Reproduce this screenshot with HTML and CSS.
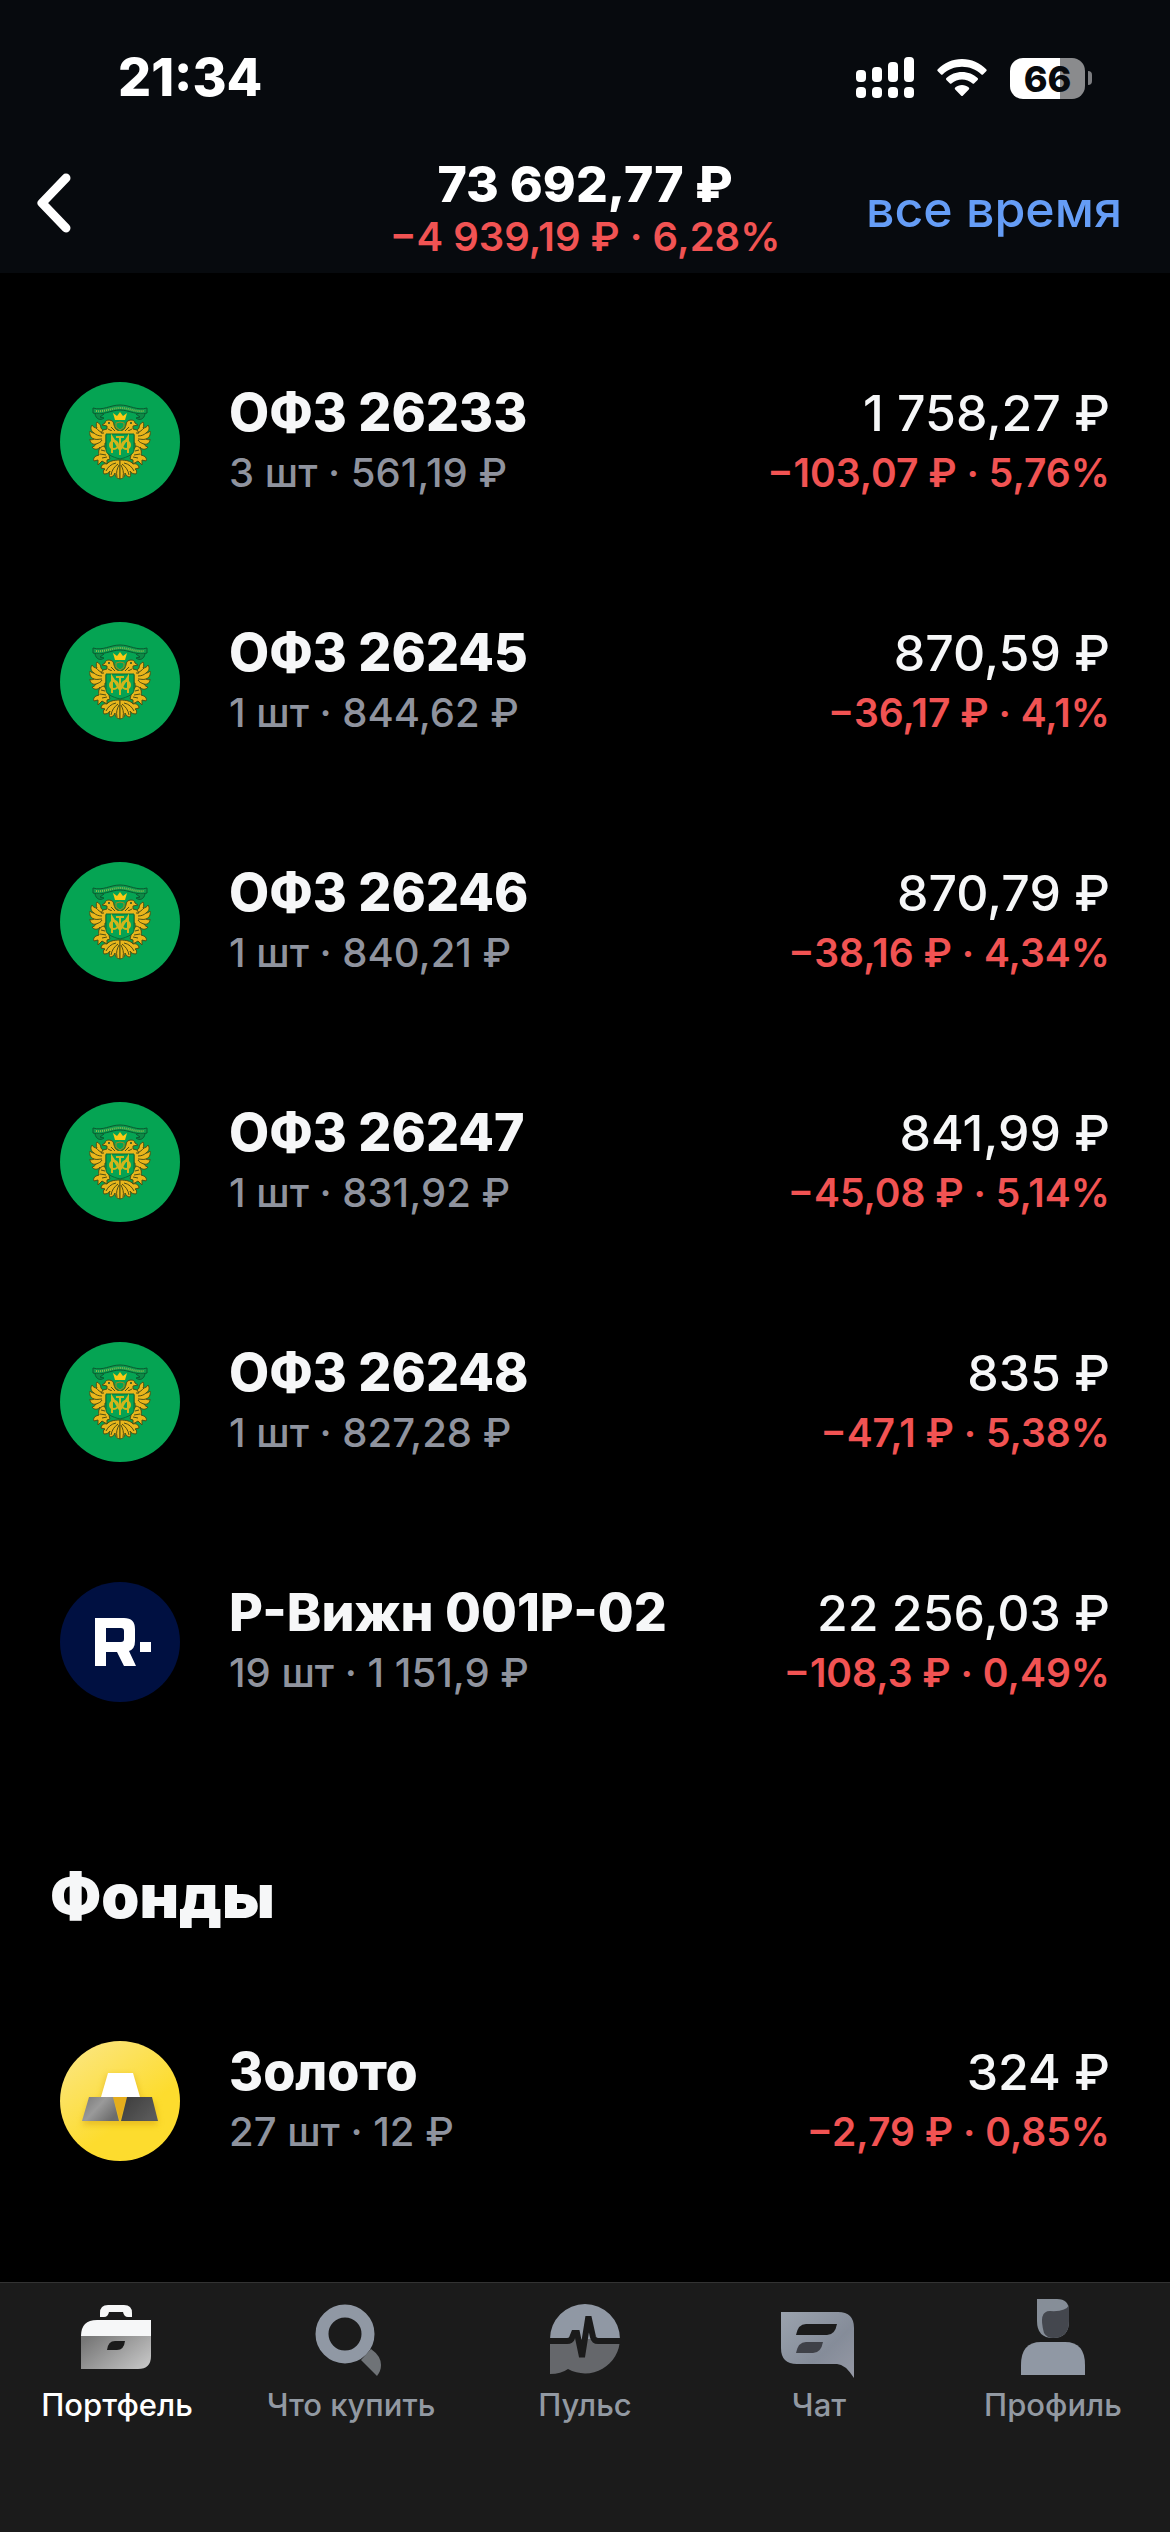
FILE: index.html
```html
<!DOCTYPE html>
<html lang="ru">
<head>
    <meta charset="UTF-8">
    <meta name="viewport" content="width=device-width, initial-scale=1.0">
    <title>Портфель</title>
    <link rel="stylesheet" href="styles.css">
</head>
<body>
    <svg class="sprite" aria-hidden="true">
        <defs>
            <linearGradient id="gold-bg" x1="0" y1="0" x2="0.5" y2="0.7">
                <stop offset="0" stop-color="#fbe78a"/>
                <stop offset="1" stop-color="#fddc2e"/>
            </linearGradient>
            <linearGradient id="bar-left" x1="0" y1="0" x2="1" y2="0.6">
                <stop offset="0" stop-color="#777"/>
                <stop offset="0.5" stop-color="#9a9a9a"/>
                <stop offset="1" stop-color="#6c6c6c"/>
            </linearGradient>
            <linearGradient id="bar-right" x1="0" y1="0" x2="1" y2="0.6">
                <stop offset="0" stop-color="#3c3c3c"/>
                <stop offset="1" stop-color="#5a5a5a"/>
            </linearGradient>
            <linearGradient id="case-bottom" x1="0" y1="0.2" x2="1" y2="0.8">
                <stop offset="0" stop-color="#777"/>
                <stop offset="1" stop-color="#c4c4c4"/>
            </linearGradient>
            <linearGradient id="grey-blue" x1="0" y1="0" x2="1" y2="1">
                <stop offset="0" stop-color="#9ba3ae"/>
                <stop offset="0.6" stop-color="#858c99"/>
                <stop offset="1" stop-color="#9699a5"/>
            </linearGradient>
            <filter id="soft" x="-30%" y="-30%" width="160%" height="160%">
                <feGaussianBlur stdDeviation="3"/>
            </filter>
            <g id="emblem-half">
                <!-- wing feathers -->
                <path d="M46 50c-2-1-4-2-5-4 0-3-2-5-4-6-1 2-1 4 0 6-2 0-4-1-5-3-2 3-1 6 2 8-2 0-3-1-4-2-1 4 1 7 4 8-2 1-3 1-4 0 0 4 3 6 6 5-1 2-3 3-4 3 2 3 6 3 8 0l-1 4c4-1 6-4 6-8h1z"/>
                <path d="M36 46c2 2 4 4 7 5M34 51c2 2 5 3 8 3M34 57c3 1 5 0 8 0M36 62c3-1 5-2 6-4" fill="none"/>
                <!-- head and neck -->
                <path d="M58 51V48c-3 0-3-3-4-5 0-3-2-5-5-5-2 0-4 1-4 3l-3 2 5 1v3l-4 1-2 3z"/>
                <circle cx="49" cy="41" r="1" fill="#12552b" stroke="none"/>
                <path d="M48 47l4 2M51 45l4 4" fill="none"/>
                <!-- leg -->
                <path d="M44 64c-5 1-6 5-5 9l-3 1c-2 1-3 3-2 5l4-1v5l4-4 5 3v-4l3-1c-1-5-3-9-6-13z"/>
                <path d="M41 68l4 1M40 72l6 1M42 76l5-1" fill="none"/>
                <!-- tail feathers -->
                <path d="M60 78c-6 0-11 1-13 4-3-1-6 1-6 4l4 1c-2 1-2 3-1 5 3 0 5-1 6-3-1 2-1 4 0 6 3 0 4-2 5-4 0 3 1 5 5 6z"/>
                <path d="M56 81c-5 1-8 4-10 8M58 82c-4 3-6 6-7 11M59 83c-2 4-3 7-2 12" fill="none"/>
            </g>
            <symbol id="minfin" viewBox="0 0 120 120">
                <circle cx="60" cy="60" r="60" fill="#05a453"/>
                <g fill="#e9b61c" stroke="#4d5014" stroke-width="1">
                    <use href="#emblem-half"/>
                    <use href="#emblem-half" transform="translate(120 0) scale(-1 1)"/>
                    <path d="M44 49h32v4H44z" stroke="none"/>
                    <path d="M55 38l-2-7 4 3 3-4 3 4 4-3-2 7z" stroke="none" fill="#fbc915"/>
                </g>
                <path d="M56 41l4-1 4 1v4l-4 3-4-3z" fill="#05a453" stroke="#a58a1a"/>
                <path d="M46 52h28v16c0 4-6 7-14 9-8-2-14-5-14-9z" fill="#05a453" stroke="#0b6a36"/>
                <g fill="none" stroke="#d3b51c" stroke-width="2">
                    <path d="M52 71V55l8 13 8-13v16M60 54v19M56 55h8"/>
                    <circle cx="54" cy="63" r="4"/>
                    <circle cx="66" cy="63" r="4"/>
                </g>
                <!-- ribbon -->
                <path d="M33 26c10 3 17-3 27-3s17 6 27 3v5c-9 3-18-3-27-3s-18 6-27 3z" fill="#0d9b4e" stroke="#0b5a30"/>
                <path d="M36 29c9 1 15-3 24-3s15 4 24 3" fill="none" stroke="#86b94c" stroke-width="2" stroke-dasharray="1 1"/>
                <path d="M35 32c1 5 5 7 9 4l-4-1 4-3M85 32c-1 5-5 7-9 4l4-1-4-3" fill="#0d8a46" stroke="#0b5a30"/>
            </symbol>
        </defs>
    </svg>

    <header class="top">
        <div class="status-bar">
            <time class="clock">21:34</time>
            <div class="status-icons">
                <svg width="58" height="42" viewBox="0 0 58 42" fill="#fff" aria-hidden="true">
                    <rect x="0" y="13" width="10" height="12" rx="4"/>
                    <rect x="16" y="10" width="10" height="15" rx="4"/>
                    <rect x="32" y="5" width="10" height="20" rx="4"/>
                    <rect x="48" y="0" width="10" height="25" rx="4"/>
                    <rect x="0" y="30" width="10" height="11" rx="4"/>
                    <rect x="16" y="30" width="10" height="11" rx="4"/>
                    <rect x="32" y="30" width="10" height="11" rx="4"/>
                    <rect x="48" y="30" width="10" height="11" rx="4"/>
                </svg>
                <svg width="50" height="42" viewBox="0 0 50 42" fill="#fff" aria-hidden="true">
                    <path d="M25 2C15.500 2 7 6 .8 12.200q-1 1 0 2l3 3q1 1 2 0C11 12.500 17.700 9.800 25 9.800s14 2.700 19.200 7.400q1 1 2 0l3-3q1-1 0-2C43 6 34.500 2 25 2z"/>
                    <path d="M25 15c-6 0-11.500 2.300-15.600 6q-1 1 0 2l3.300 3.300q1 1 2 0c2.800-2.400 6.400-3.900 10.300-3.900s7.500 1.500 10.300 3.900q1 1 2 0l3.300-3.300q1-1 0-2C36.500 17.300 31 15 25 15z"/>
                    <path d="M25 28c-2.600 0-5 .9-6.800 2.500q-1 1 0 2l5.800 6q1 1 2 0l5.800-6q1-1 0-2C30 28.900 27.600 28 25 28z"/>
                </svg>
                <div class="battery"><span class="battery-level">66</span></div>
            </div>
        </div>
        <div class="nav">
            <button type="button" class="back" aria-label="Назад">
                <svg width="40" height="72" viewBox="0 0 40 72" fill="none" stroke="#fff" stroke-width="9" stroke-linecap="round" stroke-linejoin="round" aria-hidden="true">
                    <path d="M30 5L6 30l24 25"/>
                </svg>
            </button>
            <div class="total">
                <h1 class="total-sum">73 692,77 ₽</h1>
                <p class="total-change">−4 939,19 ₽ · 6,28%</p>
            </div>
            <button type="button" class="period">все время</button>
        </div>
    </header>

    <main class="content">
        <ul class="list">
            <li>
                <a href="#" class="row">
                    <svg class="avatar" aria-hidden="true"><use href="#minfin"/></svg>
                    <span class="info"><span class="name">ОФЗ 26233</span><span class="count">3 шт · 561,19 ₽</span></span>
                    <span class="value"><span class="sum">1 758,27 ₽</span><span class="change">−103,07 ₽ · 5,76%</span></span>
                </a>
            </li>
            <li>
                <a href="#" class="row">
                    <svg class="avatar" aria-hidden="true"><use href="#minfin"/></svg>
                    <span class="info"><span class="name">ОФЗ 26245</span><span class="count">1 шт · 844,62 ₽</span></span>
                    <span class="value"><span class="sum">870,59 ₽</span><span class="change">−36,17 ₽ · 4,1%</span></span>
                </a>
            </li>
            <li>
                <a href="#" class="row">
                    <svg class="avatar" aria-hidden="true"><use href="#minfin"/></svg>
                    <span class="info"><span class="name">ОФЗ 26246</span><span class="count">1 шт · 840,21 ₽</span></span>
                    <span class="value"><span class="sum">870,79 ₽</span><span class="change">−38,16 ₽ · 4,34%</span></span>
                </a>
            </li>
            <li>
                <a href="#" class="row">
                    <svg class="avatar" aria-hidden="true"><use href="#minfin"/></svg>
                    <span class="info"><span class="name">ОФЗ 26247</span><span class="count">1 шт · 831,92 ₽</span></span>
                    <span class="value"><span class="sum">841,99 ₽</span><span class="change">−45,08 ₽ · 5,14%</span></span>
                </a>
            </li>
            <li>
                <a href="#" class="row">
                    <svg class="avatar" aria-hidden="true"><use href="#minfin"/></svg>
                    <span class="info"><span class="name">ОФЗ 26248</span><span class="count">1 шт · 827,28 ₽</span></span>
                    <span class="value"><span class="sum">835 ₽</span><span class="change">−47,1 ₽ · 5,38%</span></span>
                </a>
            </li>
            <li>
                <a href="#" class="row">
                    <svg class="avatar" viewBox="0 0 120 120" aria-hidden="true">
                        <circle cx="60" cy="60" r="60" fill="#001041"/>
                        <!-- R-Vision mark -->
                        <path d="M35 36h29q11 0 11 11v12q0 8-6 10l7 15H64l-7-14H46v14H35zM46 46v14h15q3 0 3-3v-8q0-3-3-3z" fill="#fff" fill-rule="evenodd"/>
                        <path d="M80 60h11v10H80z" fill="#fff"/>
                    </svg>
                    <span class="info"><span class="name">Р-Вижн 001P-02</span><span class="count">19 шт · 1 151,9 ₽</span></span>
                    <span class="value"><span class="sum">22 256,03 ₽</span><span class="change">−108,3 ₽ · 0,49%</span></span>
                </a>
            </li>
        </ul>

        <h2 class="section-title">Фонды</h2>
        <ul class="list">
            <li>
                <a href="#" class="row">
                    <svg class="avatar" viewBox="0 0 120 120" aria-hidden="true">
                        <circle cx="60" cy="60" r="60" fill="url(#gold-bg)"/>
                        <path d="M47 34h27l7 24 14 4 3 22H22l7-24 12-2z" fill="#d9a818" opacity="0.6" filter="url(#soft)"/>
                        <path d="M53 56h14l-7 24z" fill="#e5ad1c"/>
                        <path d="M48 32h25l7 24H41z" fill="#fff"/>
                        <path d="M29 56h24l6 24H22z" fill="url(#bar-left)"/>
                        <path d="M67 56h25l6 24H61z" fill="url(#bar-right)"/>
                    </svg>
                    <span class="info"><span class="name">Золото</span><span class="count">27 шт · 12 ₽</span></span>
                    <span class="value"><span class="sum">324 ₽</span><span class="change">−2,79 ₽ · 0,85%</span></span>
                </a>
            </li>
        </ul>
    </main>

    <nav class="tab-bar">
        <a href="#" class="tab active" aria-current="page">
            <svg class="tab-icon" viewBox="0 0 96 96" aria-hidden="true">
                <path d="M31 28v-4q0-8 8-8h16q8 0 8 8v4h-4q-4 0-5-5H40q-1 5-5 5z" fill="#f6f7f8"/>
                <path d="M12 47q0-16 16-16h54v16z" fill="#f6f7f8"/>
                <path d="M12 47h70v20q0 13-13 13H12zM38 61h10q7 0 8-9H46q-7 0-8 9z" fill="url(#case-bottom)" fill-rule="evenodd"/>
            </svg>
            Портфель
        </a>
        <a href="#" class="tab">
            <svg class="tab-icon" viewBox="0 0 96 96" aria-hidden="true">
                <path d="M58 71l10-11q10 7 10 16 0 6-4 11z" fill="#6f7377"/>
                <circle cx="42" cy="45" r="23" fill="none" stroke="#9098a4" stroke-width="13"/>
            </svg>
            Что купить
        </a>
        <a href="#" class="tab">
            <svg class="tab-icon" viewBox="0 0 96 96" aria-hidden="true">
                <path d="M13 50a35 35 0 0 1 70 0z" fill="#9098a4"/>
                <path d="M13 50h70a35 35 0 0 1-52 30q-7 5-18 5z" fill="#65676b"/>
                <path d="M10 52h20q4 0 5-3l2-5h3l5 24 6-38h1l4 18q1 4 5 4h25" fill="none" stroke="#1b1b1b" stroke-width="6"/>
            </svg>
            Пульс
        </a>
        <a href="#" class="tab">
            <svg class="tab-icon" viewBox="0 0 96 96" aria-hidden="true">
                <path d="M10 23h57q16 0 16 16v50q-9-14-17-14H26q-16 0-16-16z" fill="url(#grey-blue)"/>
                <path d="M25 46q2-11 10-11h31q-2 11-10 11z" fill="#1b1b1b"/>
                <path d="M25 64q2-11 10-11h17q-2 11-10 11z" fill="#3f4148"/>
            </svg>
            Чат
        </a>
        <a href="#" class="tab">
            <svg class="tab-icon" viewBox="0 0 96 96" aria-hidden="true">
                <path d="M32 10h20q12 0 12 12v10q0 17-16 17T32 32z" fill="#868e98"/>
                <path d="M64 16v16q0 17-16 17-6 0-9-5-6-22 6-22 16 1 19-6z" fill="#44474e"/>
                <path d="M16 86V76q0-23 20-23h24q20 0 20 23v10z" fill="#9098a4"/>
            </svg>
            Профиль
        </a>
    </nav>
</body>
</html>
```
FILE: styles.css
```css
*{
    box-sizing: border-box;
    margin: 0;
    padding: 0;
}
body{
    min-height: 100vh;
    display: flex;
    flex-direction: column;
    background-color: #000;
    color: #f6f7f8;
    font-family: Inter, "Liberation Sans", sans-serif;
    font-size: 52px;
}
a{
    color: inherit;
    text-decoration: none;
}
button{
    background: none;
    border: none;
    font: inherit;
    cursor: pointer;
}
ul{
    list-style: none;
}
svg{
    display: block;
}
.sprite{
    position: absolute;
    width: 0;
    height: 0;
}

/* header */
.top{
    background-color: #070a0e;
    color: #fff;
}
.status-bar{
    display: flex;
    justify-content: space-between;
    align-items: center;
    padding: 46px 77px 0 118px;
    line-height: 64px;
}
.clock{
    font-weight: 800;
}
.status-icons{
    display: flex;
    align-items: center;
    gap: 23px;
}
.battery{
    position: relative;
    width: 75px;
    height: 41px;
    margin-right: 8px;
    border-radius: 13px;
    background: linear-gradient(to right, #fff 67%, #8a8b8d 67%);
    color: #070a0e;
    text-align: center;
}
.battery::after{
    content: "";
    position: absolute;
    left: 78px;
    top: 13px;
    width: 4px;
    height: 14px;
    border-radius: 0 8px 8px 0;
    background-color: #7c7d80;
}
.battery-level{
    display: block;
    font-size: 36px;
    font-weight: 800;
    line-height: 42px;
}
.nav{
    display: grid;
    grid-template-columns: 1fr auto 1fr;
    align-items: center;
    padding: 46px 36px 11px;
}
.back{
    justify-self: start;
}
.total{
    text-align: center;
}
.total-sum{
    font-size: 50px;
    font-weight: 800;
    line-height: 56px;
}
.total-change{
    color: #f15353;
    font-size: 40px;
    font-weight: 600;
    line-height: 50px;
}
.period{
    justify-self: end;
    margin-right: 12px;
    color: #659df6;
    font-size: 50px;
    font-weight: 500;
    line-height: 64px;
}

/* holdings */
.content{
    flex: 1;
    padding: 49px 0;
}
.row{
    display: flex;
    align-items: center;
    height: 240px;
    padding: 0 60px;
}
.avatar{
    width: 120px;
    height: 120px;
    margin-right: 49px;
}
.info, .value{
    display: flex;
    flex-direction: column;
    padding-top: 2px;
    line-height: 60px;
    white-space: nowrap;
}
.value{
    margin-left: auto;
    text-align: right;
}
.name{
    font-weight: 800;
}
.count{
    color: #8f939e;
    font-size: 40px;
    font-weight: 500;
}
.sum{
    font-size: 50px;
    font-weight: 500;
}
.change{
    color: #f15353;
    font-size: 39px;
    font-weight: 600;
}
.section-title{
    padding: 98px 50px 49px;
    font-size: 61px;
    font-weight: 900;
    line-height: 72px;
}

/* bottom tabs */
.tab-bar{
    display: grid;
    grid-template-columns: repeat(5, 1fr);
    padding: 6px 0 108px;
    background-color: #1b1b1b;
    border-top: 1px solid #333;
}
.tab{
    display: flex;
    flex-direction: column;
    align-items: center;
    color: #9299a2;
    font-size: 31px;
    font-weight: 500;
    line-height: 39px;
}
.tab.active{
    color: #fff;
}
.tab-icon{
    width: 96px;
    height: 96px;
}
```
